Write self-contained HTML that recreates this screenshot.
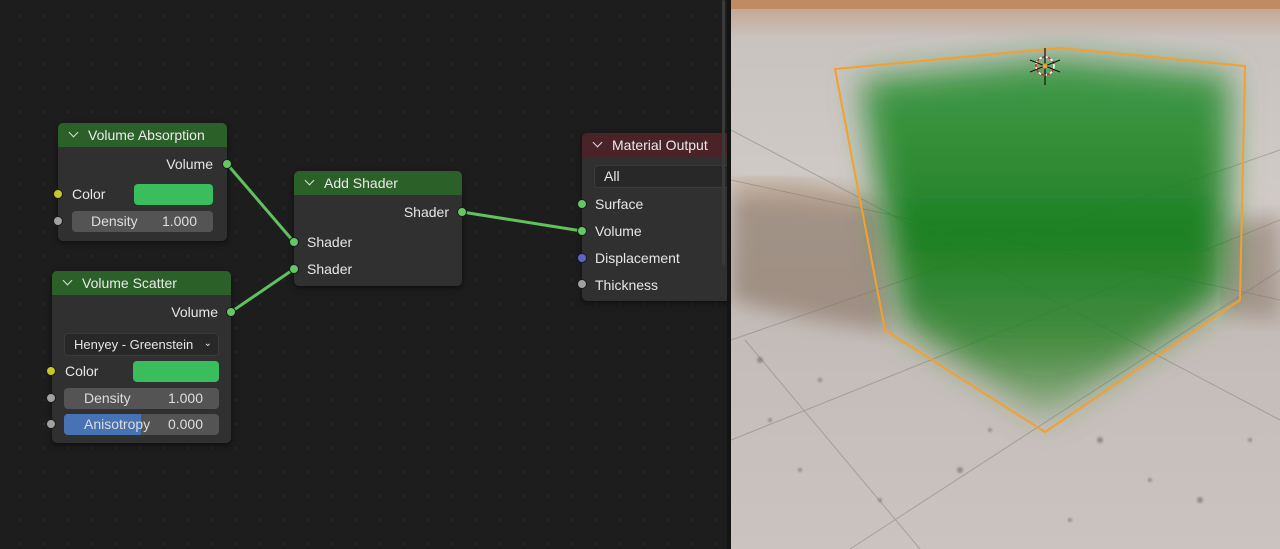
<!DOCTYPE html>
<html><head><meta charset="utf-8">
<style>
*{box-sizing:border-box;margin:0;padding:0}
body{width:1280px;height:549px;overflow:hidden;background:#1d1d1d;font-family:"Liberation Sans","DejaVu Sans",sans-serif;font-size:14px;color:#e6e6e6;position:relative}
#ed{position:absolute;left:0;top:0;width:727px;height:549px;background-color:#1d1d1d;background-image:radial-gradient(circle,#272727 1px,transparent 1.3px);background-size:24px 24px;background-position:8px 4px;overflow:hidden}
.node{position:absolute;background:#303030;border-radius:5px;box-shadow:0 2px 6px rgba(0,0,0,.55)}
.hd{height:24px;border-radius:5px 5px 0 0;background:#2b6129;padding-left:30px;line-height:24px;position:relative;color:#eaeaea}
.hd:before{content:"";position:absolute;left:12px;top:6px;width:6px;height:6px;border-right:1.5px solid #ddd;border-bottom:1.5px solid #ddd;transform:rotate(45deg)}
.t{position:absolute;white-space:nowrap}
.s{position:absolute;width:10px;height:10px;border-radius:50%;border:1px solid #1a1a1a}
.g{background:#63c763}.y{background:#c7c729}.gr{background:#a1a1a1}.b{background:#6363c7}
.f{position:absolute;background:#545454;border-radius:4px;color:#ddd;height:21px;line-height:21px}
.sw{position:absolute;background:#3abd5d;border-radius:4px}
.dd{position:absolute;background:#282828;border:1px solid #3a3a3a;border-radius:4px;height:23px;line-height:21px;padding-left:9px}
</style></head><body>
<div id="ed">
<svg width="727" height="549" style="position:absolute;left:0;top:0" >
<g stroke="#5fc25f" stroke-width="3" fill="none">
<line x1="227" y1="164" x2="294" y2="242"/>
<line x1="231" y1="312" x2="294" y2="269"/>
<line x1="462" y1="212" x2="582" y2="231"/>
</g></svg>

<div class="node" style="left:58px;top:123px;width:169px;height:118px">
<div class="hd">Volume Absorption</div>
<div class="t" style="right:14px;top:33px">Volume</div>
<div class="t" style="left:14px;top:63px">Color</div>
<div class="sw" style="left:76px;top:61px;width:79px;height:21px"></div>
<div class="f" style="left:14px;top:88px;width:141px"><span style="position:absolute;left:19px">Density</span><span style="position:absolute;right:16px">1.000</span></div>
</div>
<div class="s g" style="left:222px;top:159px"></div>
<div class="s y" style="left:53px;top:189px"></div>
<div class="s gr" style="left:53px;top:216px"></div>

<div class="node" style="left:294px;top:171px;width:168px;height:115px">
<div class="hd">Add Shader</div>
<div class="t" style="right:13px;top:33px">Shader</div>
<div class="t" style="left:13px;top:63px">Shader</div>
<div class="t" style="left:13px;top:90px">Shader</div>
</div>
<div class="s g" style="left:457px;top:207px"></div>
<div class="s g" style="left:289px;top:237px"></div>
<div class="s g" style="left:289px;top:264px"></div>

<div class="node" style="left:52px;top:271px;width:179px;height:172px">
<div class="hd">Volume Scatter</div>
<div class="t" style="right:13px;top:33px">Volume</div>
<div class="dd" style="left:12px;top:62px;width:155px;font-size:13px">Henyey - Greenstein<span style="position:absolute;right:6px;top:-1px;font-size:10px">&#8964;</span></div>
<div class="t" style="left:13px;top:92px">Color</div>
<div class="sw" style="left:81px;top:90px;width:86px;height:21px"></div>
<div class="f" style="left:12px;top:117px;width:155px"><span style="position:absolute;left:20px">Density</span><span style="position:absolute;right:16px">1.000</span></div>
<div class="f" style="left:12px;top:143px;width:155px;overflow:hidden"><div style="position:absolute;left:0;top:0;width:77px;height:21px;background:#4772b3"></div><span style="position:absolute;left:20px">Anisotropy</span><span style="position:absolute;right:16px">0.000</span></div>
</div>
<div class="s g" style="left:226px;top:307px"></div>
<div class="s y" style="left:46px;top:366px"></div>
<div class="s gr" style="left:46px;top:393px"></div>
<div class="s gr" style="left:46px;top:419px"></div>

<div class="node" style="left:582px;top:133px;width:160px;height:168px">
<div class="hd" style="background:#4a2329">Material Output</div>
<div class="dd" style="left:12px;top:32px;width:150px">All</div>
<div class="t" style="left:13px;top:63px">Surface</div>
<div class="t" style="left:13px;top:90px">Volume</div>
<div class="t" style="left:13px;top:117px">Displacement</div>
<div class="t" style="left:13px;top:144px">Thickness</div>
</div>
<div class="s g" style="left:577px;top:199px"></div>
<div class="s g" style="left:577px;top:226px"></div>
<div class="s b" style="left:577px;top:253px"></div>
<div class="s gr" style="left:577px;top:279px"></div>
<div style="position:absolute;left:722px;top:0;width:3px;height:265px;background:#3a3a3a;border-radius:2px"></div>
</div>
<div style="position:absolute;left:727px;top:0;width:4px;height:549px;background:#141414"></div>

<svg width="549" height="549" style="position:absolute;left:731px;top:0" viewBox="731 0 549 549">
<defs>
<linearGradient id="gnd" x1="0" y1="0" x2="0" y2="1">
<stop offset="0" stop-color="#b9a08c"/><stop offset=".03" stop-color="#c6b0a0"/><stop offset=".07" stop-color="#c9c3c0"/><stop offset=".35" stop-color="#d0cac7"/><stop offset=".6" stop-color="#c4bcb8"/><stop offset="1" stop-color="#cbc3c0"/>
</linearGradient>
<linearGradient id="gv" x1="0" y1="0" x2="0" y2="1">
<stop offset="0" stop-color="#23902c" stop-opacity=".8"/><stop offset=".5" stop-color="#187d1e" stop-opacity=".97"/><stop offset=".8" stop-color="#2a8226" stop-opacity=".8"/><stop offset="1" stop-color="#3a8a30" stop-opacity=".3"/>
</linearGradient>
<filter id="bl" x="-30%" y="-30%" width="160%" height="160%"><feGaussianBlur stdDeviation="16"/></filter>
<filter id="bl2"><feGaussianBlur stdDeviation="10"/></filter>
<filter id="bl3"><feGaussianBlur stdDeviation="1"/></filter>
</defs>
<rect x="731" y="0" width="549" height="549" fill="url(#gnd)"/>
<rect x="731" y="0" width="549" height="9" fill="#c08a63"/>
<path d="M731 195 Q800 185 880 205 L890 330 Q800 320 731 300Z" fill="#85705f" opacity=".6" filter="url(#bl2)"/>
<path d="M731 180 Q800 175 870 200 L870 215 Q800 200 731 200Z" fill="#b89a7a" opacity=".5" filter="url(#bl2)"/>
<path d="M1225 225 L1280 215 L1280 320 L1225 315Z" fill="#85705f" opacity=".5" filter="url(#bl2)"/>
<g fill="#6e5e55" opacity=".55" filter="url(#bl3)">
<circle cx="770" cy="420" r="2"/><circle cx="800" cy="470" r="2"/><circle cx="960" cy="470" r="3"/><circle cx="1100" cy="440" r="3"/><circle cx="1150" cy="480" r="2"/><circle cx="1200" cy="500" r="3"/><circle cx="1070" cy="520" r="2"/><circle cx="880" cy="500" r="2"/><circle cx="1250" cy="440" r="2"/><circle cx="990" cy="430" r="2"/><circle cx="760" cy="360" r="3"/><circle cx="820" cy="380" r="2"/>
</g>
<g stroke="#7a7472" stroke-width="1" opacity=".45">
<line x1="731" y1="340" x2="1280" y2="150"/>
<line x1="731" y1="180" x2="1280" y2="300"/>
<line x1="731" y1="440" x2="1280" y2="220"/>
<line x1="731" y1="130" x2="1280" y2="420"/>
<line x1="745" y1="340" x2="920" y2="549"/>
<line x1="850" y1="549" x2="1280" y2="270"/>
</g>
<path d="M860 80 L1060 58 L1230 75 L1225 295 L1045 420 L900 320Z" fill="url(#gv)" filter="url(#bl)"/>
<path d="M835 69 L1060 48 L1245 66 L1240 300 L1045 432 L885 330Z" fill="none" stroke="#f4a02e" stroke-width="2"/>
<circle cx="1045" cy="66" r="9" fill="none" stroke="#fff" stroke-width="1.5" stroke-dasharray="3 3"/>
<circle cx="1045" cy="66" r="9" fill="none" stroke="#d22" stroke-width="1.5" stroke-dasharray="3 3" stroke-dashoffset="3"/>
<line x1="1045" y1="48" x2="1045" y2="85" stroke="#111" stroke-width="1.2"/>
<line x1="1030" y1="60" x2="1060" y2="72" stroke="#111" stroke-width="1"/>
<line x1="1030" y1="72" x2="1060" y2="60" stroke="#111" stroke-width="1"/>
<circle cx="1045" cy="66" r="2.5" fill="#f4a02e"/>
</svg>
</body></html>
